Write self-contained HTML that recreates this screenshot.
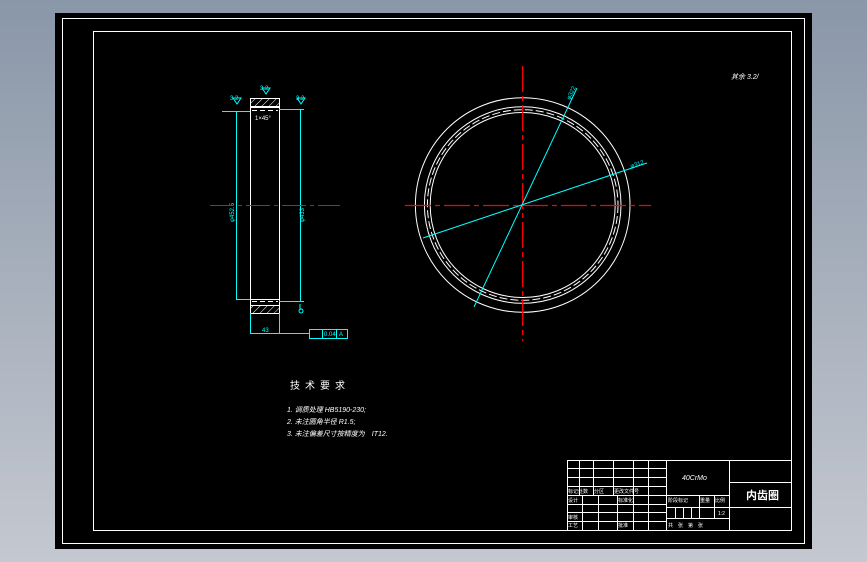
<!DOCTYPE html>
<html><head><style>
html,body{margin:0;padding:0;}
body{width:867px;height:562px;overflow:hidden;background:linear-gradient(#8a97a8,#c4c8d0);}
svg{position:absolute;left:0;top:0;}
text{font-family:"Liberation Sans","Noto Sans CJK SC",sans-serif;}
</style></head><body>
<svg width="867" height="562" viewBox="0 0 867 562">
<defs>
<pattern id="h" width="5" height="5" patternUnits="userSpaceOnUse" patternTransform="rotate(45)"><line x1="0" y1="0" x2="0" y2="5" stroke="#fff" stroke-width="1"/></pattern>
</defs>
<rect x="55" y="13" width="757" height="536" fill="#000"/>
<g fill="none" stroke="#fff" stroke-width="1">
<rect x="62.5" y="18.5" width="742" height="525"/>
<rect x="93.5" y="31.5" width="698" height="499"/>
</g>
<!-- left part -->
<g stroke="#fff" fill="none" stroke-width="1">
<rect x="250.5" y="98.5" width="29" height="215"/>
<rect x="250.5" y="98.5" width="29" height="8" fill="url(#h)"/>
<rect x="250.5" y="305.5" width="29" height="8" fill="url(#h)"/>
<line x1="250" y1="107.5" x2="280" y2="107.5"/>
<line x1="250" y1="299.5" x2="280" y2="299.5"/>
<line x1="252" y1="110.5" x2="278" y2="110.5" stroke-dasharray="5 3"/>
<line x1="252" y1="301.5" x2="278" y2="301.5" stroke-dasharray="5 3"/>
</g>
<g stroke="#0ff" fill="none" stroke-width="1">
<line x1="236.5" y1="111" x2="236.5" y2="299"/>
<line x1="300.5" y1="109" x2="300.5" y2="301"/>
<line x1="222" y1="111.5" x2="250" y2="111.5"/>
<line x1="279" y1="109.5" x2="304" y2="109.5"/>
<line x1="236" y1="299.5" x2="250" y2="299.5"/>
<line x1="279" y1="301.5" x2="304" y2="301.5"/>
<line x1="250.5" y1="313" x2="250.5" y2="334"/>
<line x1="279.5" y1="313" x2="279.5" y2="334"/>
<line x1="250" y1="333.5" x2="310" y2="333.5"/>
<rect x="309.5" y="329.5" width="38" height="9"/>
<line x1="322.5" y1="329" x2="322.5" y2="338"/>
<line x1="336.5" y1="329" x2="336.5" y2="338"/>
<path d="M233 98 l4 6 4-6z M297 98 l4 6 4-6z M262 88 l4 6 4-6z M300 304 v6"/>
<circle cx="301" cy="311" r="2"/>
</g>
<g fill="#0ff" font-size="6">
<text x="230" y="100">3.2</text><text x="296" y="100">3.2</text><text x="260" y="90">3.2</text>
<text x="255" y="120" fill="#fff">1×45°</text>
<text x="262" y="332">43</text>
<text x="324" y="336" font-size="6">0.04</text><text x="339" y="336">A</text>
<text transform="translate(234,222) rotate(-90)">φ452.5</text>
<text transform="translate(304,222) rotate(-90)">φ433</text>
</g>
<line x1="210" y1="205.5" x2="340" y2="205.5" stroke="#f00" stroke-dasharray="24 4 4 4"/>
<!-- circle view -->
<g fill="none" stroke="#fff" stroke-width="1">
<circle cx="522.7" cy="205" r="107.3"/>
<circle cx="522.7" cy="205" r="98.3"/>
<circle cx="522.7" cy="205" r="95.3" stroke-dasharray="8 3"/>
<circle cx="522.7" cy="205" r="92.5"/>
</g>
<g stroke="#f00" stroke-width="1.3">
<line x1="522.7" y1="66" x2="522.7" y2="341" stroke-dasharray="26 4 5 4"/>
<line x1="405" y1="205.5" x2="651" y2="205.5" stroke-dasharray="26 4 5 4"/>
</g>
<g stroke="#0ff" stroke-width="1">
<line x1="474" y1="307" x2="577" y2="88"/>
<line x1="423" y1="238" x2="647" y2="163"/>
</g>
<g fill="#0ff" font-size="6">
<text transform="translate(570,100) rotate(-65)">φ322</text>
<text transform="translate(631,168) rotate(-18)">φ312</text>
</g>
<text x="731" y="79" fill="#fff" font-size="7" font-style="italic">其余 3.2/</text>
<!-- tech requirements -->
<g fill="#fff">
<text x="290" y="389" font-size="10" letter-spacing="5">技术要求</text>
<text x="287" y="412" font-size="7" font-style="italic">1. 调质处理 HB5190-230;</text>
<text x="287" y="424" font-size="7" font-style="italic">2. 未注圆角半径 R1.5;</text>
<text x="287" y="436" font-size="7" font-style="italic">3. 未注偏差尺寸按精度为　IT12.</text>
</g>
<!-- title block -->
<g stroke="#fff" stroke-width="1" fill="none">
<rect x="567.5" y="460.5" width="224" height="70"/>
<path d="M567 468.5H666M567 477.5H666M567 486.5H666M567 495.5H666M567 504.5H666M567 512.5H666M567 521.5H666"/>
<path d="M579.5 460V495M593.5 460V495M613.5 460V495M633.5 460V530M648.5 460V530M666.5 460V530M729.5 460V530"/>
<path d="M582.5 495V530M598.5 495V530M617.5 495V530"/>
<path d="M666 495.5H729M666 507.5H729M666 518.5H729M699.5 495V518M714.5 495V518M675.5 507V518M683.5 507V518M691.5 507V518"/>
<path d="M729 482.5H791M729 507.5H791"/>
</g>
<g fill="#fff" font-size="5">
<text x="682" y="480" font-size="7" font-style="italic">40CrMo</text>
<text x="746" y="499" font-size="11" font-weight="bold">内齿圈</text>
<text x="568" y="493">标记处数</text><text x="594" y="493">分区</text><text x="614" y="493">更改文件号</text>
<text x="568" y="502">设计</text><text x="618" y="502">标准化</text>
<text x="568" y="519">审核</text><text x="568" y="527">工艺</text><text x="618" y="527">批准</text>
<text x="668" y="502">阶段标记</text><text x="700" y="502">重量</text><text x="715" y="502">比例</text>
<text x="718" y="515">1:2</text><text x="668" y="527">共　张　第　张</text>
</g>
</svg>
</body></html>
